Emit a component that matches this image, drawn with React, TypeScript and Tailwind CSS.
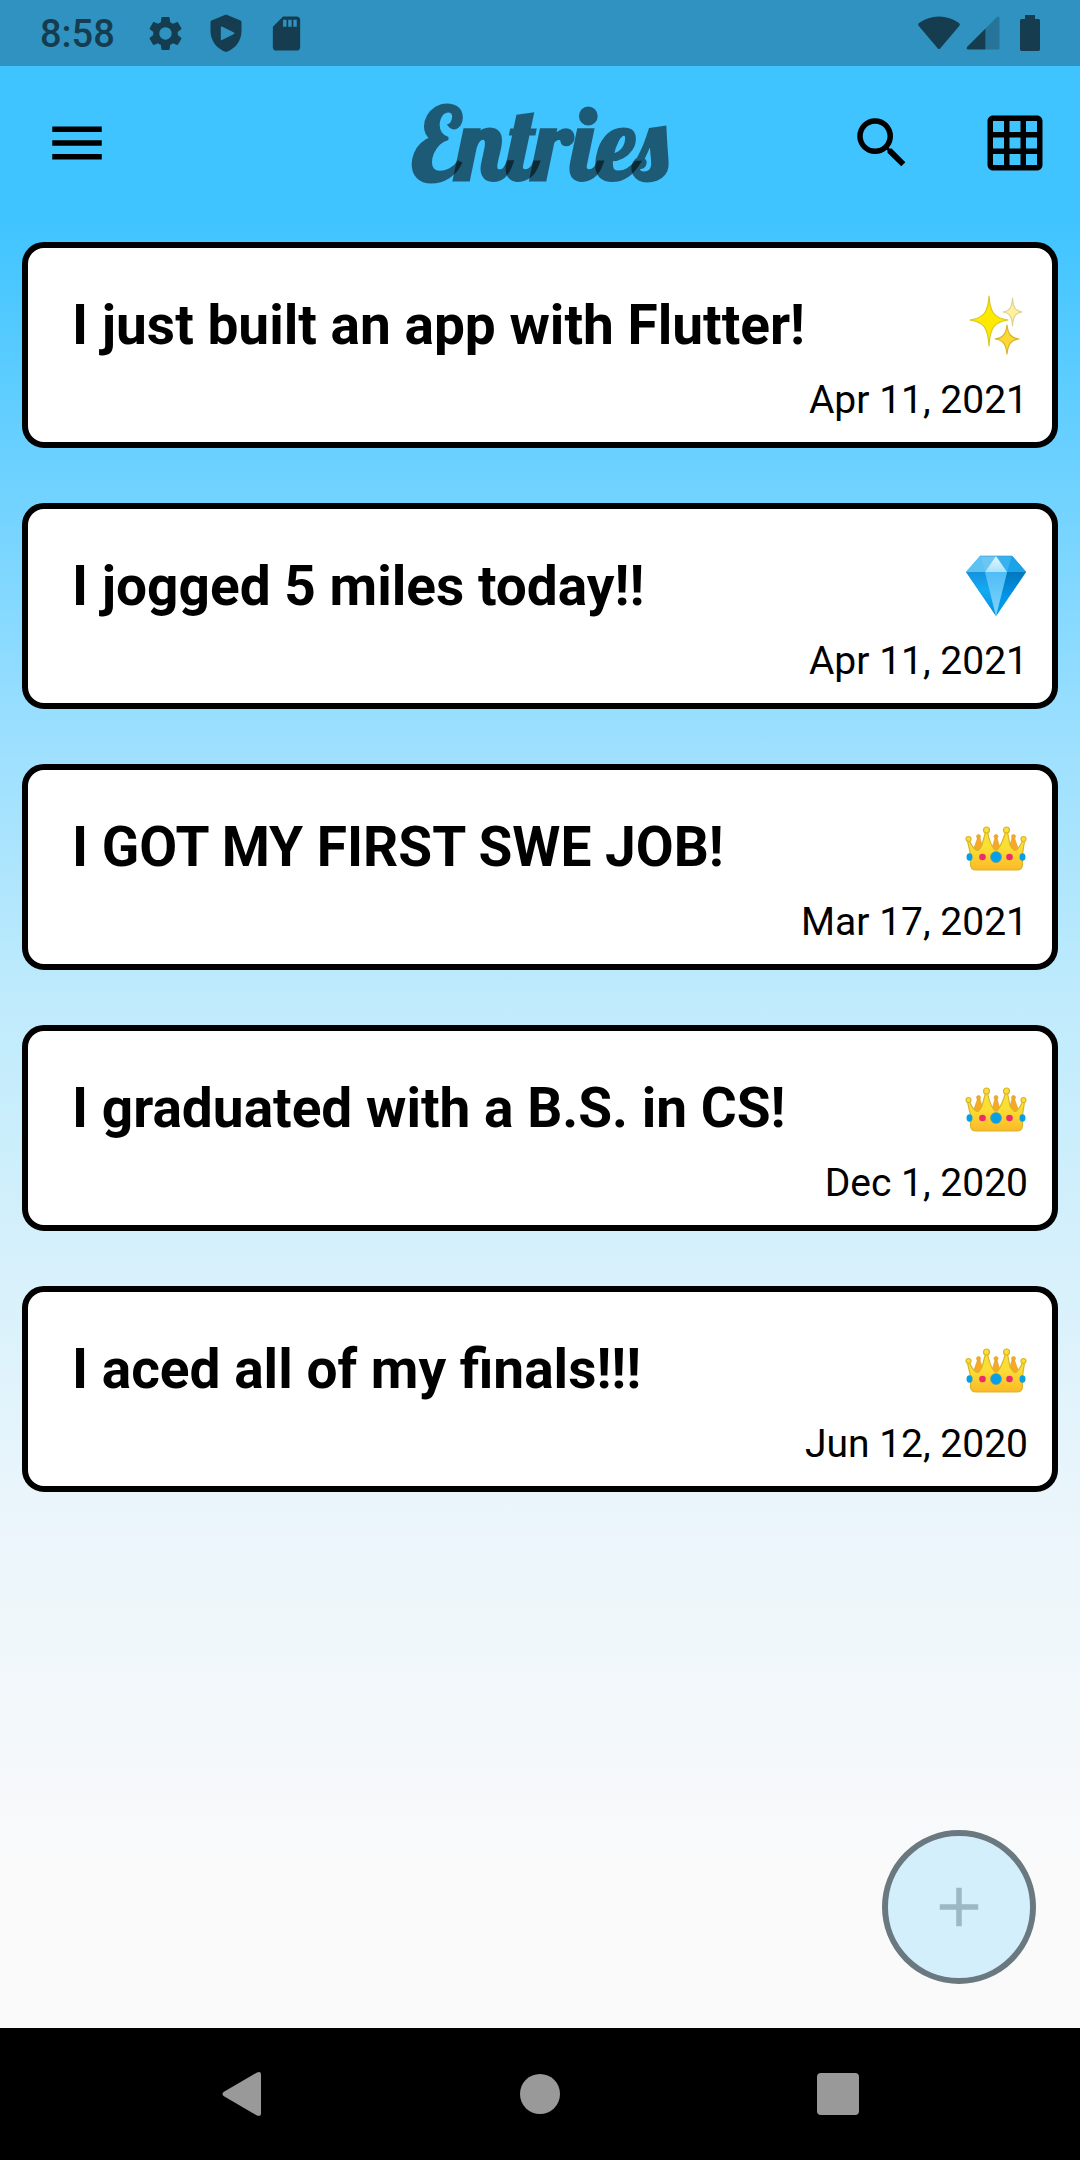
import { MdMenu, MdSearch, MdGridOn, MdAdd, MdSettings, MdSdCard } from "react-icons/md";

type Mood = "sparkles" | "gem" | "crown";

type Entry = {
  title: string;
  date: string;
  mood: Mood;
};

const entries: Entry[] = [
  { title: "I just built an app with Flutter!", date: "Apr 11, 2021", mood: "sparkles" },
  { title: "I jogged 5 miles today!!", date: "Apr 11, 2021", mood: "gem" },
  { title: "I GOT MY FIRST SWE JOB!", date: "Mar 17, 2021", mood: "crown" },
  { title: "I graduated with a B.S. in CS!", date: "Dec 1, 2020", mood: "crown" },
  { title: "I aced all of my finals!!!", date: "Jun 12, 2020", mood: "crown" },
];

function Sparkles() {
  return (
    <svg viewBox="0 0 64 64" className="size-16" role="img" aria-label="Sparkles">
      <g strokeWidth="1.2" strokeLinejoin="round">
        <path
          d="M25 3C26 19 30 25 44 27C30 29 26 35 25 53C24 35 20 29 6 27C20 25 24 19 25 3Z"
          fill="#fdea00"
          stroke="#d9c71e"
        />
        <path
          d="M48.500 5C49 14 51 18 58 19C51 20 49 24 48.500 33C48 24 46 20 39 19C46 18 48 14 48.500 5Z"
          fill="#fff29a"
          stroke="#dcd291"
        />
        <path
          d="M43 32C44 41 47 45 55 46C47 47 44 51 43 61C42 51 39 47 31 46C39 45 42 41 43 32Z"
          fill="#fdd835"
          stroke="#d9b32c"
        />
      </g>
    </svg>
  );
}

function Gem() {
  return (
    <svg viewBox="0 0 64 64" className="size-16" role="img" aria-label="Gem">
      <defs>
        <linearGradient id="gem-left" x1="0" y1="0" x2="0" y2="1">
          <stop offset="0" stopColor="#1592dd" />
          <stop offset="0.4" stopColor="#14a9f4" />
          <stop offset="1" stopColor="#0b8edc" />
        </linearGradient>
        <linearGradient id="gem-mid" x1="0" y1="0" x2="0" y2="1">
          <stop offset="0" stopColor="#4fbcf6" />
          <stop offset="1" stopColor="#81d4fa" />
        </linearGradient>
        <linearGradient id="gem-right" x1="0" y1="0" x2="0" y2="1">
          <stop offset="0" stopColor="#0277bd" />
          <stop offset="0.6" stopColor="#0397ea" />
        </linearGradient>
        <linearGradient id="gem-top" x1="0" y1="0" x2="0" y2="1">
          <stop offset="0" stopColor="#e6f7ff" />
          <stop offset="1" stopColor="#a8e2fc" />
        </linearGradient>
      </defs>
      <path d="M16 2H48L62 18L32 62L2 18Z" fill="#29b6f6" />
      <path d="M16 2L2 18H21Z" fill="#5cc2f2" />
      <path d="M16 2H32L21 18Z" fill="#6cc6f2" />
      <path d="M32 2H48L43 18Z" fill="#38b2ee" />
      <path d="M48 2L62 18H43Z" fill="#1ba3ea" />
      <path d="M32 2L43 18H21Z" fill="url(#gem-top)" />
      <path d="M2 18H21L32 62Z" fill="url(#gem-left)" />
      <path d="M43 18H62L32 62Z" fill="url(#gem-right)" />
      <path d="M21 18H43L32 62Z" fill="url(#gem-mid)" />
      <path d="M16 2H48L62 18" fill="none" stroke="#2b92cc" strokeWidth="1" opacity="0.6" />
    </svg>
  );
}

function Crown() {
  return (
    <svg viewBox="0 -9 64 64" className="size-16" role="img" aria-label="Crown">
      <defs>
        <linearGradient id="crown-gold" x1="0" y1="0" x2="0" y2="1">
          <stop offset="0.4" stopColor="#fbdf34" />
          <stop offset="1" stopColor="#fbb929" />
        </linearGradient>
      </defs>
      <g fill="#f7a825" stroke="#dba02a" strokeWidth="0.6">
        <path d="M13.500 14L10 24L14 28L19 24L16 14Z" />
        <path d="M31 14L28 24L32 28L36 24L33 14Z" />
        <path d="M48 14L45 24L50 28L54 24L50.500 14Z" />
        <circle cx="14.500" cy="12.500" r="2" />
        <circle cx="32" cy="12.500" r="2" />
        <circle cx="49.500" cy="12.500" r="2" />
      </g>
      <path
        d="M3.500 17L6.500 30V41Q7 46 12 46H53Q58 46 58.500 41V30L60.500 17H58.500Q55 24 52.500 26Q50 28 46 21L43.500 8H41.500Q38 20 34 25Q32 27 30 25Q26 20 23.500 8H21.500L18 21Q15 28 12 26Q8 23 5.500 17Z"
        fill="url(#crown-gold)"
        stroke="#d8b52b"
        strokeWidth="1.200"
        strokeLinejoin="round"
      />
      <g fill="#fbdf34" stroke="#d8b52b" strokeWidth="1.200">
        <circle cx="4.500" cy="15" r="2.500" />
        <circle cx="22.500" cy="6" r="3" />
        <circle cx="42.500" cy="6" r="3" />
        <circle cx="59.500" cy="15" r="2.500" />
      </g>
      <circle cx="32" cy="33" r="5.500" fill="#069fe8" stroke="#5b9f9b" strokeWidth="0.6" />
      <circle cx="18.500" cy="33" r="3.300" fill="#ec2b6c" />
      <circle cx="45.500" cy="33" r="3.300" fill="#ec2b6c" />
      <ellipse cx="5.500" cy="33" rx="3" ry="3.800" fill="#069fe8" />
      <ellipse cx="58.500" cy="33" rx="3" ry="3.800" fill="#069fe8" />
    </svg>
  );
}

const moods = { sparkles: Sparkles, gem: Gem, crown: Crown };

function StatusBar() {
  return (
    <div className="flex h-[66px] items-center justify-between bg-[#3092c0] px-10 text-[#153d4f]">
      <div className="flex items-center gap-6">
        <time className="pt-0.5 text-[38px] font-medium leading-none">8:58</time>
        <div className="flex items-center gap-5 pl-1.5">
          <MdSettings className="size-[41px]" />
          <svg viewBox="0 0 40 40" className="size-10" fill="currentColor">
            <path
              fillRule="evenodd"
              d="M20 1.500L34.500 7.500Q35.500 8 35.500 9V18C35.500 28 29 36 20 39C11 36 4.500 28 4.500 18V9Q4.500 8 5.500 7.500ZM16 13.500Q14.800 13 14.800 14.500V26Q14.800 27.500 16 27L28 21Q29.200 20.200 28 19.500Z"
            />
          </svg>
          <MdSdCard className="size-[41px]" />
        </div>
      </div>
      <div className="flex items-center">
        <svg viewBox="0 0 42 34" className="h-[34px] w-[42px]" fill="currentColor">
          <path d="M1 7Q-.5 8.300.8 10L19 31.500Q21 34.500 23 31.500L41.200 10Q42.500 8.300 41 7Q32 .5 21 .5Q10 .5 1 7Z" />
        </svg>
        <svg viewBox="0 0 34 34" className="ml-1.5 size-[34px]" fill="currentColor">
          <path opacity="0.35" d="M19.500 12.500L31 1Q33.500 0 33.500 2V32Q33.500 33.500 32 33.500H19.500Z" />
          <path d="M19.500 12.500V33.500H2Q0 33 1 31Z" />
        </svg>
        <svg viewBox="0 0 20 36" className="ml-5 h-9 w-5" fill="currentColor">
          <path d="M5 0H15V4H18.500Q20 4 20 5.500V34Q20 36 18.500 36H1.500Q0 36 0 34V5.500Q0 4 1.500 4H5Z" />
        </svg>
      </div>
    </div>
  );
}

function AppBar() {
  return (
    <header className="grid h-[154px] grid-cols-[1fr_auto_1fr] items-center bg-[#40c4ff] px-8">
      <button type="button" aria-label="Menu" className="w-fit px-3">
        <MdMenu className="size-[66px]" />
      </button>
      <h1 className="font-[Lobster,'Liberation_Serif',serif] text-[99px] font-bold leading-none text-black/54">
        Entries
      </h1>
      <div className="flex items-center justify-end gap-[67px]">
        <button type="button" aria-label="Search">
          <MdSearch className="size-[66px]" />
        </button>
        <button type="button" aria-label="Grid view">
          <MdGridOn className="size-[66px]" />
        </button>
      </div>
    </header>
  );
}

function EntryCard({ entry }: { entry: Entry }) {
  const MoodIcon = moods[entry.mood];

  return (
    <li className="flex h-[206px] flex-col rounded-[22px] border-6 border-black bg-white pl-11 pr-6 pt-11">
      <div className="flex items-center justify-between">
        <h2 className="text-[55px] font-bold leading-[66px]">{entry.title}</h2>
        <MoodIcon />
      </div>
      <p className="mt-[19px] text-right text-[39px] leading-[46px]">{entry.date}</p>
    </li>
  );
}

function NavBar() {
  return (
    <nav className="grid h-[132px] grid-cols-3 items-center bg-black px-[93px] text-[#999999]">
      <button type="button" aria-label="Back" className="justify-self-center">
        <svg viewBox="0 0 40 46" className="h-[46px] w-10" fill="currentColor">
          <path d="M1.500 21L35 1.500Q39 0 39 3.500V42.500Q39 46 35 44.500L1.500 25Q-.5 23 1.500 21Z" />
        </svg>
      </button>
      <button type="button" aria-label="Home" className="size-10 justify-self-center rounded-full bg-current" />
      <button type="button" aria-label="Recents" className="size-[42px] justify-self-center rounded-[4px] bg-current" />
    </nav>
  );
}

function App() {
  return (
    <div className="flex min-h-screen flex-col bg-black font-[Roboto,sans-serif] text-black">
      <StatusBar />
      <AppBar />
      <main className="relative flex-1 bg-[linear-gradient(#40c4ff,#9adfff_28%,#bfebfc_43%,#e9f5fb_70%,#fafafa_92%)] px-[22px] pt-[22px]">
        <ul className="flex flex-col gap-[55px]">
          {entries.map((entry) => (
            <EntryCard key={entry.title} entry={entry} />
          ))}
        </ul>
        <button
          type="button"
          aria-label="Add entry"
          className="absolute bottom-11 right-11 flex size-[154px] items-center justify-center rounded-full border-6 border-[#6a7880] bg-[#d4effc] text-[#9bb8c5]"
        >
          <MdAdd className="size-[66px]" />
        </button>
      </main>
      <NavBar />
    </div>
  );
}

export default App;
